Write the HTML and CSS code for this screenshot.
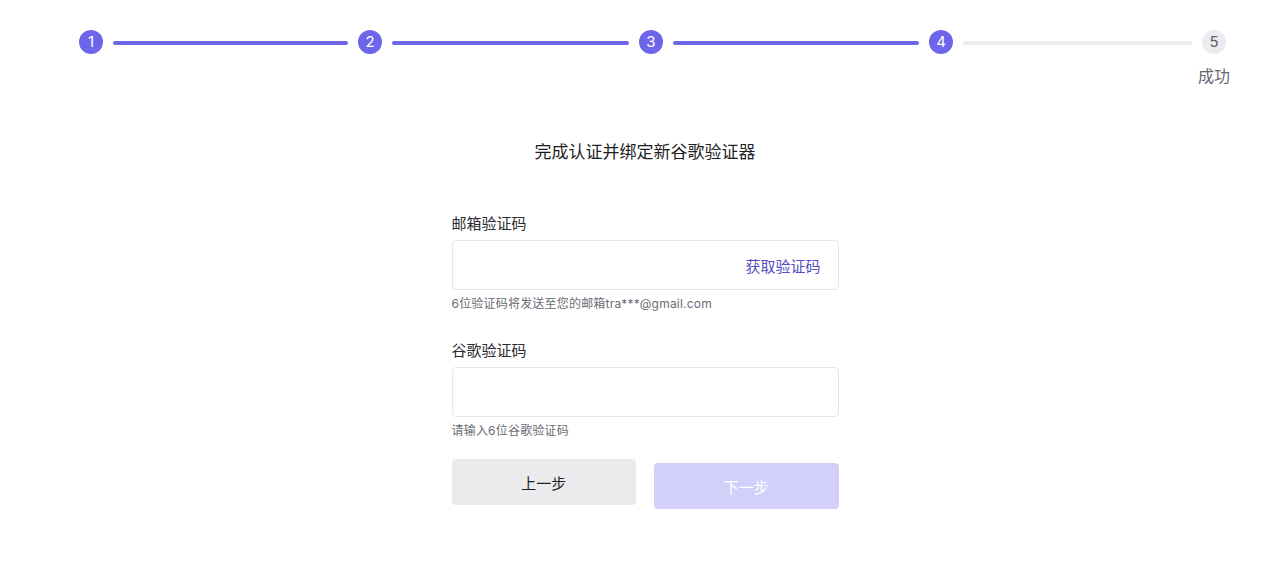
FILE: index.html
```html
<!DOCTYPE html>
<html lang="zh-CN">

<head>
    <meta charset="UTF-8">
    <meta name="viewport" content="width=device-width, initial-scale=1.0">
    <title>绑定新谷歌验证器</title>
    <link rel="stylesheet" href="styles.css">
</head>

<body>
    <div class="steps">
        <div class="step done"><span class="dot">1</span></div>
        <div class="line done"></div>
        <div class="step done"><span class="dot">2</span></div>
        <div class="line done"></div>
        <div class="step done"><span class="dot">3</span></div>
        <div class="line done"></div>
        <div class="step done"><span class="dot">4</span></div>
        <div class="line"></div>
        <div class="step"><span class="dot">5</span><span class="step-label">成功</span></div>
    </div>

    <div class="main">
        <h2 class="title">完成认证并绑定新谷歌验证器</h2>

        <form class="form">
            <div class="field">
                <label for="email-code">邮箱验证码</label>
                <div class="input-box">
                    <input id="email-code" type="text">
                    <a class="send-code" href="#">获取验证码</a>
                </div>
                <p class="hint">6位验证码将发送至您的邮箱tra***@gmail.com</p>
            </div>

            <div class="field">
                <label for="google-code">谷歌验证码</label>
                <div class="input-box">
                    <input id="google-code" type="text">
                </div>
                <p class="hint">请输入6位谷歌验证码</p>
            </div>

            <div class="buttons">
                <button type="button" class="btn btn-prev">上一步</button>
                <button type="button" class="btn btn-next" disabled>下一步</button>
            </div>
        </form>
    </div>
</body>

</html>
```

FILE: styles.css
```css
body {
    margin: 0;
    background: #ffffff;
    font-family: "Inter", "Noto Sans CJK SC", sans-serif;
    color: #222226;
}

/* step bar */
.steps {
    display: flex;
    align-items: flex-start;
    padding: 30px 54px 0 79px;
    height: 80px;
}

.step {
    width: 24px;
    display: flex;
    flex-direction: column;
    align-items: center;
}

.dot {
    width: 24px;
    height: 24px;
    border-radius: 50%;
    background: #ebebf0;
    color: #5f5f66;
    font-size: 15px;
    line-height: 24px;
    text-align: center;
}

.step.done .dot {
    background: #6e66ea;
    color: #ffffff;
}

.step-label {
    margin-top: 11px;
    font-size: 16px;
    line-height: 22px;
    color: #66666e;
    white-space: nowrap;
}

.line {
    flex: 229 1 0;
    height: 4px;
    margin: 11px 10px 0;
    border-radius: 2px;
    background: #ebebf0;
}

.line.done {
    background: #6e66ea;
}

.steps .line:nth-child(2) {
    flex-grow: 235;
}

.steps .line:nth-child(4) {
    flex-grow: 237;
}

.steps .line:nth-child(6) {
    flex-grow: 246;
}

/* form */
.main {
    padding-left: 10px;
}

.title {
    margin: 30px 0 0;
    font-size: 17px;
    font-weight: 400;
    line-height: 24px;
    text-align: center;
    color: #1f1f23;
}

.form {
    width: 387px;
    margin: 49px auto 0;
}

.field {
    margin-bottom: 27px;
}

.field label {
    display: block;
    margin-bottom: 5px;
    font-size: 15px;
    line-height: 22px;
    color: #2a2a30;
}

.input-box {
    display: flex;
    align-items: center;
    height: 50px;
    box-sizing: border-box;
    border: 1px solid #e6e6eb;
    border-radius: 4px;
    padding: 0 17px 0 14px;
}

.input-box input {
    flex: 1;
    min-width: 0;
    border: none;
    outline: none;
    font-size: 15px;
    background: transparent;
}

.send-code {
    font-size: 15px;
    color: #534cc4;
    text-decoration: none;
}

.hint {
    margin: 5px 0 0;
    font-size: 12px;
    letter-spacing: 0.2px;
    line-height: 18px;
    color: #6b6b73;
}

.buttons {
    display: flex;
    align-items: flex-start;
    gap: 18px;
    margin-top: -8px;
}

.btn {
    flex: 1;
    height: 46px;
    border: none;
    border-radius: 4px;
    font-family: inherit;
    font-size: 15px;
    cursor: pointer;
}

.btn-prev {
    background: #ebebee;
    color: #1f1f23;
}

.btn-next {
    margin-top: 4px;
    background: #d3cffb;
    color: #ffffff;
    cursor: not-allowed;
}
```
